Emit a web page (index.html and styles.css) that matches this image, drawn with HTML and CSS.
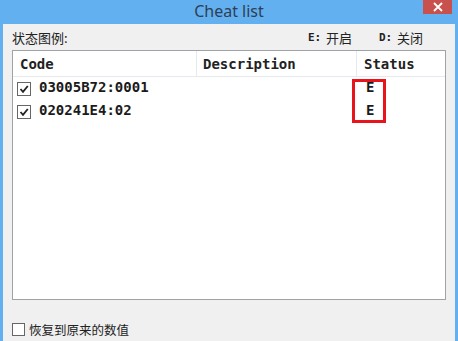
FILE: index.html
```html
<!DOCTYPE html>
<html>
<head>
<meta charset="utf-8">
<link rel="stylesheet" href="styles.css">
</head>
<body>
<div class="window">
  <div class="titlebar">
    <span class="title">Cheat list</span>
    <span class="close"><svg width="10" height="10" viewBox="0 0 10 10"><path d="M1 1L9 9M9 1L1 9" stroke="#fff" stroke-width="1.8"/></svg></span>
  </div>
  <div class="content">
    <div class="legend">
      <span class="legend-title">状态图例:</span>
      <span class="legend-item"><b class="key">E:</b>开启</span>
      <span class="legend-item"><b class="key">D:</b>关闭</span>
    </div>
    <div class="list">
      <div class="head">
        <div class="hcell c-code">Code</div>
        <div class="hcell c-desc">Description</div>
        <div class="hcell c-status">Status</div>
      </div>
      <div class="rows">
        <div class="row">
          <div class="cell c-code"><span class="cb checked"><svg width="10" height="10" viewBox="0 0 10 10"><path d="M1.5 5L4 7.8L8.8 2" fill="none" stroke="#222" stroke-width="1.8"/></svg></span><span class="txt">03005B72:0001</span></div>
          <div class="cell c-desc"></div>
          <div class="cell c-status"><span class="txt">E</span></div>
        </div>
        <div class="row">
          <div class="cell c-code"><span class="cb checked"><svg width="10" height="10" viewBox="0 0 10 10"><path d="M1.5 5L4 7.8L8.8 2" fill="none" stroke="#222" stroke-width="1.8"/></svg></span><span class="txt">020241E4:02</span></div>
          <div class="cell c-desc"></div>
          <div class="cell c-status"><span class="txt">E</span></div>
        </div>
        <div class="highlight"></div>
      </div>
    </div>
    <label class="restore"><span class="cb"></span>恢复到原来的数值</label>
  </div>
</div>
</body>
</html>
```

FILE: styles.css
```css
html, body {
  margin: 0;
  padding: 0;
}
body {
  width: 458px;
  height: 341px;
  overflow: hidden;
  font-family: "Noto Sans", "Noto Sans CJK SC", sans-serif;
}
.window {
  width: 458px;
  height: 341px;
  background: #63b0f1;
  padding: 0 3px;
  box-sizing: border-box;
  display: flex;
  flex-direction: column;
}
.titlebar {
  position: relative;
  height: 24px;
  display: flex;
  justify-content: center;
  align-items: center;
}
.title {
  font-family: "Noto Sans", sans-serif;
  font-size: 16px;
  color: #2f3e52;
  margin-top: -3px;
}
.close {
  position: absolute;
  right: 3px;
  top: 0;
  width: 29px;
  height: 14px;
  background: #c9514d;
  display: flex;
  justify-content: center;
  align-items: center;
}
.content {
  flex: 1;
  background: #f0f0f0;
  padding: 6px 9px 0 9px;
  display: flex;
  flex-direction: column;
}
.legend {
  display: flex;
  align-items: center;
  height: 14px;
  font-family: "Noto Sans CJK SC", sans-serif;
  font-size: 13px;
  color: #222;
  padding-right: 23px;
}
.legend-title {
  flex: 1;
}
.legend-item {
  margin-left: 27px;
  display: flex;
  align-items: center;
}
.key {
  font-family: "DejaVu Sans Mono", monospace;
  font-size: 11px;
  font-weight: bold;
  width: 18px;
}
.list {
  margin-top: 6px;
  height: 250px;
  box-sizing: border-box;
  border: 1px solid #9fa3a8;
  background: #fff;
  display: flex;
  flex-direction: column;
  font-family: "DejaVu Sans Mono", monospace;
  font-weight: bold;
  font-size: 14px;
  color: #1a1a1a;
}
.head {
  display: flex;
  height: 25px;
  border-bottom: 1px solid #e6e9ee;
}
.hcell {
  display: flex;
  align-items: center;
  color: #222;
}
.c-code { width: 184px; padding-left: 7px; box-sizing: border-box; }
.c-desc { width: 160px; padding-left: 6px; box-sizing: border-box; }
.c-status { flex: 1; padding-left: 7px; box-sizing: border-box; }
.hcell.c-code, .hcell.c-desc {
  border-right: 1px solid #e6e9ee;
}
.rows {
  position: relative;
}
.row {
  display: flex;
  height: 23px;
}
.cell {
  display: flex;
  align-items: center;
}
.txt {
  margin-top: -3px;
}
.row .c-code { padding-left: 4px; }
.row .c-status { padding-left: 9px; }
.cb {
  width: 13px;
  height: 13px;
  border: 1px solid #555;
  box-sizing: border-box;
  background: #fff;
  margin-right: 8px;
  display: inline-flex;
  justify-content: center;
  align-items: center;
  flex: none;
}
.row .cb {
  width: 14px;
  height: 14px;
  margin-right: 8px;
  border-color: #666;
}
.highlight {
  position: absolute;
  left: 339px;
  top: 2px;
  width: 34px;
  height: 44px;
  box-sizing: border-box;
  border: 3.5px solid #e8141c;
}
.restore {
  margin-top: 20px;
  display: flex;
  align-items: center;
  font-family: "Noto Sans CJK SC", sans-serif;
  font-size: 12.5px;
  color: #222;
}
.restore .cb {
  margin-right: 4px;
  border-color: #666;
}
```
